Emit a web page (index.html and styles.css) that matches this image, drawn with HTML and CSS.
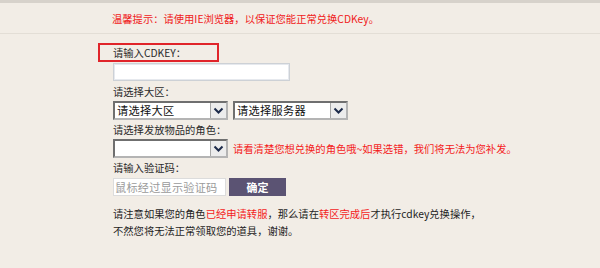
FILE: index.html
```html
<!DOCTYPE html>
<html lang="zh-CN">
<head>
<meta charset="utf-8">
<title>CDKey兑换</title>
<link rel="stylesheet" href="styles.css">
</head>
<body>
<div class="topband"></div>
<div class="notice">温馨提示：请使用IE浏览器，以保证您能正常兑换CDKey。</div>
<form class="form">
  <div class="label label-hl">请输入CDKEY：</div>
  <input class="text-input" type="text">
  <div class="label">请选择大区：</div>
  <div class="row">
    <div class="sel"><span class="sel-text">请选择大区</span><span class="sel-btn"><svg width="11" height="8" viewBox="0 0 11 8"><polyline points="1.5,1.5 5.5,5.5 9.5,1.5" fill="none" stroke="#1c2a4a" stroke-width="2"/></svg></span></div>
    <div class="sel"><span class="sel-text">请选择服务器</span><span class="sel-btn"><svg width="11" height="8" viewBox="0 0 11 8"><polyline points="1.5,1.5 5.5,5.5 9.5,1.5" fill="none" stroke="#1c2a4a" stroke-width="2"/></svg></span></div>
  </div>
  <div class="label">请选择发放物品的角色：</div>
  <div class="row">
    <div class="sel"><span class="sel-text"></span><span class="sel-btn"><svg width="11" height="8" viewBox="0 0 11 8"><polyline points="1.5,1.5 5.5,5.5 9.5,1.5" fill="none" stroke="#1c2a4a" stroke-width="2"/></svg></span></div>
    <span class="warn">请看清楚您想兑换的角色哦~如果选错，我们将无法为您补发。</span>
  </div>
  <div class="label">请输入验证码：</div>
  <div class="row">
    <input class="code-input" type="text" placeholder="鼠标经过显示验证码">
    <button class="btn" type="button">确定</button>
  </div>
  <p class="note">请注意如果您的角色<span class="red">已经申请转服</span>，那么请在<span class="red">转区完成后</span>才执行cdkey兑换操作，<br>不然您将无法正常领取您的道具，谢谢。</p>
</form>
</body>
</html>
```
FILE: styles.css
```css
html, body {
  margin: 0;
  padding: 0;
  background: #f2ede6;
}
body {
  font-family: "Noto Sans CJK SC", "Noto Sans", sans-serif;
  font-size: 10.3px;
  color: #2a2a2a;
  width: 600px;
  height: 268px;
  overflow: hidden;
}
.topband {
  height: 3px;
  background: #d7d2cb;
}
.notice {
  height: 31px;
  line-height: 31px;
  padding-left: 112px;
  color: #f02020;
  border-bottom: 1px solid #e3ded6;
  box-sizing: border-box;
}
.form {
  margin: 0;
  padding: 9px 0 0 113px;
}
.label {
  height: 19px;
  line-height: 19px;
  color: #2a2a2a;
}
.label-hl {
  width: 104px;
  margin-left: -15px;
  padding-left: 13px;
  height: 15px;
  line-height: 15px;
  border: 2px solid #e0242a;
  box-sizing: content-box;
}
.text-input {
  display: block;
  margin: 1px 0 1px 0;
  width: 177px;
  height: 18px;
  box-sizing: border-box;
  border: 1px solid #cdd1d6;
  box-shadow: inset 0 0 0 1px #e6e9ee;
  background: #fff;
  padding: 0 3px;
}
.row {
  display: flex;
  align-items: center;
  gap: 5px;
  height: 19px;
}
.sel {
  display: flex;
  width: 115px;
  height: 19px;
  box-sizing: border-box;
  border-top: 2px solid #6f6f6f;
  border-left: 2px solid #6f6f6f;
  border-right: 2px solid #b4b4b4;
  border-bottom: 2px solid #b4b4b4;
  background: #fff;
}
.sel-text {
  flex: 1;
  font-size: 11.2px;
  line-height: 15px;
  padding-left: 2px;
  color: #111;
  letter-spacing: 0.3px;
}
.sel-btn {
  width: 15px;
  display: flex;
  align-items: center;
  justify-content: center;
  background: #ececec;
  border-left: 1px solid #a8a8a8;
}
.warn {
  color: #f41c1c;
}
.code-input {
  width: 113px;
  height: 18px;
  box-sizing: border-box;
  border: 1px solid #dcdcdc;
  background: #fff;
  padding: 0 1px;
  font-family: inherit;
  font-size: 11.2px;
  color: #999;
  letter-spacing: 0.2px;
}
.code-input::placeholder {
  color: #9a9a9a;
}
.btn {
  width: 57px;
  height: 18px;
  border: 0;
  margin-left: -2px;
  background: #5b5373;
  color: #fff;
  font-family: inherit;
  font-size: 11px;
  font-weight: bold;
  padding: 0;
}
.note {
  margin: 9px 0 0 0;
  line-height: 17px;
  color: #1e1e1e;
}
.red {
  color: #f41c1c;
}
```
